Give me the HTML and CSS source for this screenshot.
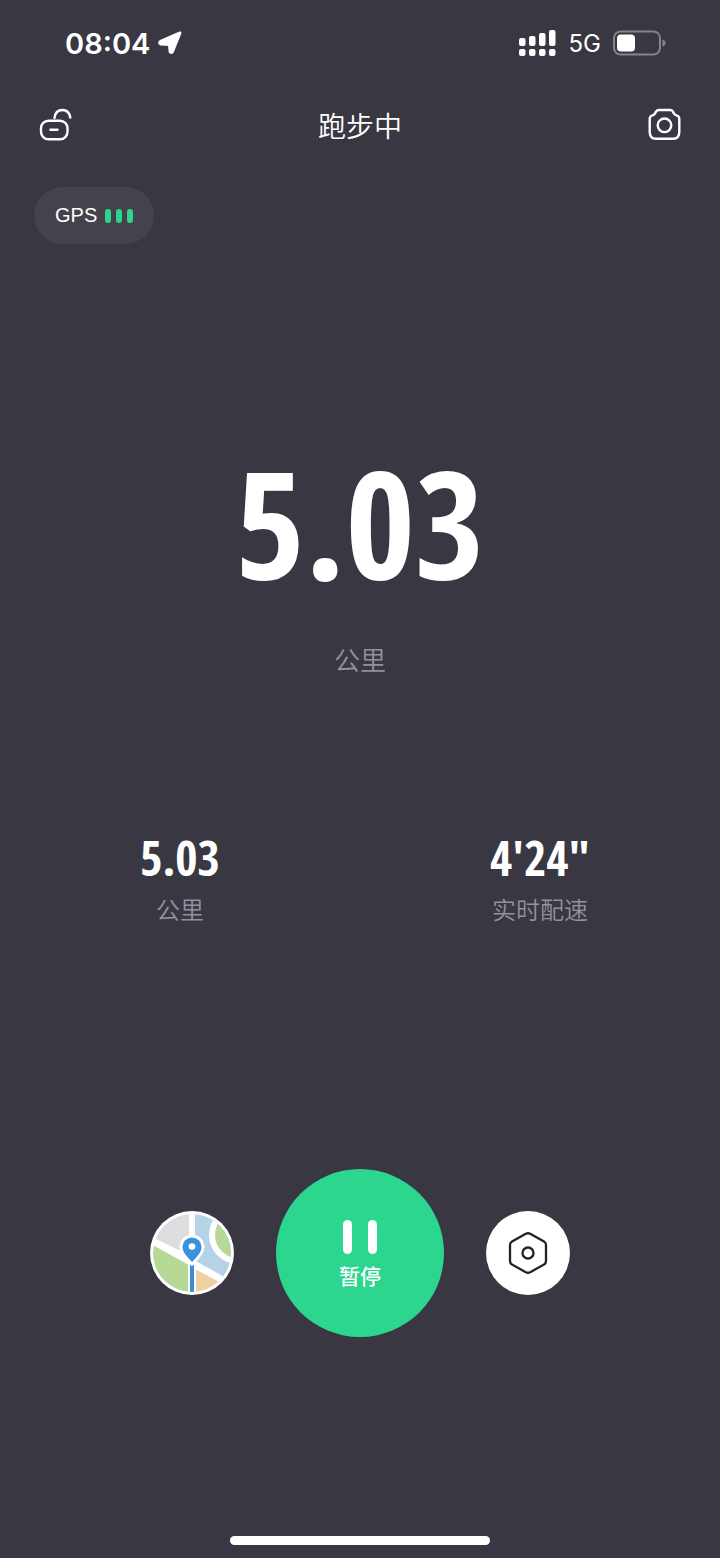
FILE: index.html
```
<!DOCTYPE html>
<html lang="zh-CN">
<head>
    <meta charset="UTF-8">
    <meta name="viewport" content="width=device-width, initial-scale=1.0">
    <title>跑步中</title>
    <link rel="stylesheet" href="styles.css">
</head>
<body>

<div class="status-bar">
    <div class="status-left">
        <span class="time">08:04</span>
        <svg class="location-icon" width="24" height="24" viewBox="0 0 24 24">
            <path d="M22 2L14.500 20.500Q13 22.500 12 20.500L11.500 13.500L3 13Q0.500 12 2.500 10.500Z" fill="#fff" stroke="#fff" stroke-width="3" stroke-linejoin="round"/>
        </svg>
    </div>
    <div class="status-right">
        <svg width="38" height="28" viewBox="0 0 38 28" fill="#fff">
            <rect x="0" y="9" width="6.500" height="8" rx="2"/>
            <rect x="10" y="7" width="6.500" height="10" rx="2"/>
            <rect x="20" y="4" width="6.500" height="13" rx="2"/>
            <rect x="30" y="1" width="6.500" height="16" rx="2"/>
            <rect x="0" y="20" width="6.500" height="7" rx="2"/>
            <rect x="10" y="20" width="6.500" height="7" rx="2"/>
            <rect x="20" y="20" width="6.500" height="7" rx="2"/>
            <rect x="30" y="20" width="6.500" height="7" rx="2"/>
        </svg>
        <span class="network">5G</span>
        <svg width="53" height="26" viewBox="0 0 53 26">
            <rect x="1" y="1.500" width="46" height="23" rx="6.500" fill="none" stroke="#85848c" stroke-width="2"/>
            <rect x="4" y="4.500" width="18" height="17" rx="4" fill="#fff"/>
            <path d="M49.500 9.500Q52.500 10.500 52.500 13T49.500 16.500Z" fill="#85848c"/>
        </svg>
    </div>
</div>

<header class="header">
    <button class="icon-button" aria-label="锁屏">
        <svg width="34" height="34" viewBox="0 0 34 34" fill="none" stroke="#fff" stroke-width="2.400" stroke-linecap="round">
            <rect x="3" y="12.700" width="26.500" height="18.600" rx="7.500"/>
            <path d="M16.500 10C17 5 20 2 24.500 2C29 2 31.500 5 32.300 9.500"/>
            <path d="M12.500 21.700H19.500"/>
        </svg>
    </button>
    <h1 class="title">跑步中</h1>
    <button class="icon-button" aria-label="拍照">
        <svg width="34" height="34" viewBox="0 0 34 34" fill="none" stroke="#fff" stroke-width="2.400" stroke-linejoin="round">
            <path d="M11 2H22Q24 2 25.200 3.800Q25.700 6.500 28.500 7.300Q31.300 8 31.300 11V24Q31.300 30.700 25 30.700H8Q1.700 30.700 1.700 24V11Q1.700 8 4.500 7.300Q7.300 6.500 7.800 3.800Q9 2 11 2Z"/>
            <circle cx="16.500" cy="17.300" r="6.800"/>
        </svg>
    </button>
</header>

<div class="gps">
    <span>GPS</span>
    <div class="gps-signal">
        <i></i><i></i><i></i>
    </div>
</div>

<main class="run">
    <div class="distance">5.03</div>
    <div class="distance-label">公里</div>
    <div class="stats">
        <div class="stat">
            <div class="stat-value">5.03</div>
            <div class="stat-label">公里</div>
        </div>
        <div class="stat">
            <div class="stat-value">4'24"</div>
            <div class="stat-label">实时配速</div>
        </div>
    </div>
</main>

<div class="controls">
    <button class="round-button" aria-label="地图">
        <svg width="84" height="84" viewBox="0 0 84 84">
            <defs>
                <clipPath id="map-clip"><circle cx="42" cy="42" r="39"/></clipPath>
            </defs>
            <g clip-path="url(#map-clip)">
                <path d="M0 0H39V44L0 25Z" fill="#dcdddf"/>
                <path d="M45 0H84V72L45 50Z" fill="#b5d2e7"/>
                <path d="M0 32L39 54V84H0Z" fill="#b7d998"/>
                <path d="M45 58L75 74L60 84H45Z" fill="#eed1a3"/>
                <path d="M0 28.500L84 75" stroke="#fff" stroke-width="6.500"/>
                <path d="M42 0V84" stroke="#fff" stroke-width="6"/>
                <circle cx="88" cy="24" r="26" fill="#b7d998" stroke="#fff" stroke-width="6"/>
                <path d="M42 52V84" stroke="#fff" stroke-width="8"/>
                <path d="M42 54V82" stroke="#3c8fd3" stroke-width="4"/>
            </g>
            <path d="M42 51C36 45 32.500 40.500 32.500 36A9.500 9.500 0 0 1 51.500 36C51.500 40.500 48 45 42 51Z" fill="#3c92da" stroke="#fff" stroke-width="6" paint-order="stroke"/>
            <circle cx="42" cy="35.500" r="3.300" fill="#fff"/>
        </svg>
    </button>
    <button class="pause-button">
        <svg width="36" height="36" viewBox="0 0 36 36" fill="#fff">
            <rect x="1" y="1" width="9" height="34" rx="4.500"/>
            <rect x="26" y="1" width="9" height="34" rx="4.500"/>
        </svg>
        <span>暂停</span>
    </button>
    <button class="round-button" aria-label="设置">
        <svg width="42" height="42" viewBox="0 0 42 42" fill="none" stroke="#222" stroke-width="2.300" stroke-linejoin="round">
            <path d="M18.800 1.800Q21 0.700 23.200 1.800L37 9.500Q39 10.700 39 13V29Q39 31.300 37 32.500L23.200 40.200Q21 41.300 18.800 40.200L5 32.500Q3 31.300 3 29V13Q3 10.700 5 9.500Z"/>
            <circle cx="21" cy="21" r="5.500"/>
        </svg>
    </button>
</div>

<div class="home-indicator"></div>

</body>
</html>
```
FILE: styles.css
```
* {
    box-sizing: border-box;
}
body {
    display: flex;
    flex-direction: column;
    min-height: 100vh;
    margin: 0;
    padding-bottom: 13px;
    background-color: #383742;
    color: #fff;
    font-family: "Liberation Sans", "Noto Sans CJK SC", sans-serif;
}
button {
    padding: 0;
    border: none;
    background: none;
    color: inherit;
    font-family: inherit;
    cursor: pointer;
}
svg {
    display: block;
}
.status-bar {
    display: flex;
    justify-content: space-between;
    align-items: center;
    height: 86px;
    padding: 0 54px 0 65px;
}
.status-left,
.status-right {
    display: flex;
    align-items: center;
}
.status-left {
    gap: 8px;
}
.status-right {
    gap: 12px;
}
.time {
    font-family: Inter, sans-serif;
    font-size: 29px;
    font-weight: 600;
}
.network {
    font-family: Inter, sans-serif;
    font-size: 24px;
}
.header {
    display: flex;
    justify-content: space-between;
    align-items: center;
    height: 78px;
    padding: 0 38px;
}
.title {
    margin: 0;
    font-size: 28px;
    font-weight: 350;
}
.gps {
    display: flex;
    align-items: center;
    align-self: flex-start;
    gap: 8px;
    height: 57px;
    margin: 23px 0 0 34px;
    padding: 0 21px;
    border-radius: 29px;
    background-color: #43424d;
    font-size: 20px;
}
.gps-signal {
    display: flex;
    gap: 5px;
}
.gps-signal i {
    width: 6px;
    height: 14px;
    border-radius: 3px;
    background-color: #2cd68f;
}
.run {
    margin-top: 198px;
    text-align: center;
}
.distance,
.stat-value {
    font-family: "Noto Sans ExtraCondensed", "Open Sans Condensed", "Roboto Condensed", sans-serif;
    font-weight: 700;
}
.distance {
    font-size: 150px;
    line-height: 160px;
}
.distance-label {
    margin-top: 39px;
    font-size: 26px;
    font-weight: 350;
    line-height: 40px;
    color: #92919c;
}
.stats {
    display: grid;
    grid-template-columns: 1fr 1fr;
    margin-top: 147px;
}
.stat-value {
    font-size: 48px;
    line-height: 60px;
}
.stat-label {
    margin-top: 6px;
    font-size: 24px;
    font-weight: 350;
    line-height: 34px;
    color: #92919c;
}
.controls {
    display: flex;
    justify-content: center;
    align-items: center;
    gap: 42px;
    margin: 241px 0 40px;
}
.round-button,
.pause-button {
    display: flex;
    flex-direction: column;
    justify-content: center;
    align-items: center;
    border-radius: 50%;
}
.round-button {
    width: 84px;
    height: 84px;
    background-color: #fff;
}
.pause-button {
    gap: 6px;
    width: 168px;
    height: 168px;
    padding-top: 6px;
    background-color: #2cd68f;
    font-size: 21px;
    font-weight: 500;
    line-height: 32px;
}
.home-indicator {
    align-self: center;
    width: 36%;
    height: 9px;
    margin-top: auto;
    border-radius: 5px;
    background-color: #fff;
}
```
